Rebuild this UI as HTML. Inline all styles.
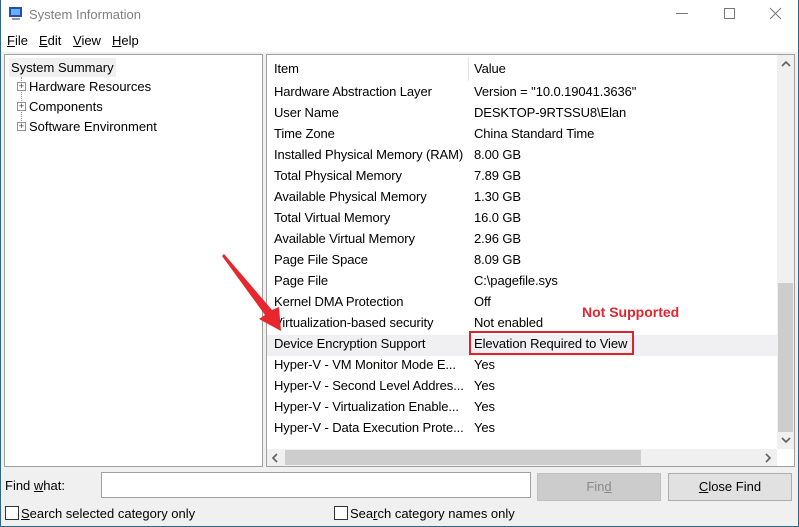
<!DOCTYPE html>
<html><head><meta charset="utf-8"><style>
*{margin:0;padding:0;box-sizing:border-box}
body{width:799px;height:527px;overflow:hidden;font-family:"Liberation Sans",sans-serif;font-size:13px;color:#000;background:#f0f0f0;position:relative}
.a{position:absolute;white-space:nowrap}
#win{position:absolute;left:0;top:0;width:799px;height:527px;border:1px solid #2f6585;border-top:none}
.u{text-decoration:underline}
.row{position:absolute;left:274px;height:21px;line-height:21px;letter-spacing:-0.1px}
.val{position:absolute;left:474px;height:21px;line-height:21px;letter-spacing:-0.1px}
.pl{display:inline-block;width:9px;height:9px;border:1px solid #919191;position:absolute;left:12px;font-size:9px;line-height:7px;text-align:center;color:#333;background:#fff}
</style></head><body>
<div class="a" style="left:0;top:0;width:799px;height:52px;background:#fff"></div>
<svg class="a" style="left:8px;top:6px" width="16" height="16"><rect x="1" y="1" width="13" height="10" fill="#2050b0"/><rect x="3" y="3" width="9" height="6" fill="#6ab0f0"/><rect x="4" y="12" width="8" height="2" fill="#999"/></svg>
<div class="a" style="left:29px;top:7px;color:#808080;font-size:13px">System Information</div>
<div class="a" style="left:676px;top:13px;width:12px;height:1px;background:#777"></div>
<div class="a" style="left:724px;top:8px;width:11px;height:11px;border:1px solid #777"></div>
<svg class="a" style="left:769px;top:7px" width="13" height="13"><path d="M1 1L12 12M12 1L1 12" stroke="#777" stroke-width="1"/></svg>
<div class="a" style="left:7px;top:33px"><span class="u">F</span>ile</div>
<div class="a" style="left:39px;top:33px"><span class="u">E</span>dit</div>
<div class="a" style="left:73px;top:33px"><span class="u">V</span>iew</div>
<div class="a" style="left:112px;top:33px"><span class="u">H</span>elp</div>
<div class="a" style="left:4px;top:54px;width:259px;height:413px;background:#fff;border:1px solid #a0a0a0">
 <div class="a" style="left:4px;top:3px;width:107px;height:19px;background:#f0f0f0;line-height:19px;padding-left:2px">System Summary</div>
 <div class="a" style="left:16px;top:22px;height:50px;border-left:1px dotted #999"></div>
 <div class="pl" style="top:27px">+</div><div class="a" style="left:24px;top:24px">Hardware Resources</div>
 <div class="pl" style="top:47px">+</div><div class="a" style="left:24px;top:44px">Components</div>
 <div class="pl" style="top:67px">+</div><div class="a" style="left:24px;top:64px">Software Environment</div>
</div>
<div class="a" style="left:266px;top:54px;width:529px;height:413px;background:#fff;border:1px solid #a0a0a0;overflow:hidden">
 <div class="a" style="left:0;top:280px;width:510px;height:21px;background:#f0f0f2"></div>
 <div class="a" style="left:201px;top:2px;width:1px;height:24px;background:#e5e5e5"></div>
 <div class="a" style="left:510px;top:0;width:17px;height:394px;background:#f0f0f0"></div>
 <div class="a" style="left:511px;top:228px;width:15px;height:149px;background:#cdcdcd"></div>
 <svg class="a" style="left:514px;top:5px" width="10" height="8"><path d="M1 6L5 2L9 6" stroke="#606060" stroke-width="1.6" fill="none"/></svg>
 <svg class="a" style="left:514px;top:381px" width="10" height="8"><path d="M1 2L5 6L9 2" stroke="#606060" stroke-width="1.6" fill="none"/></svg>
 <div class="a" style="left:0;top:394px;width:510px;height:17px;background:#f0f0f0"></div>
 <div class="a" style="left:18px;top:395px;width:356px;height:15px;background:#cdcdcd"></div>
 <svg class="a" style="left:4px;top:398px" width="8" height="10"><path d="M6 1L2 5L6 9" stroke="#606060" stroke-width="1.6" fill="none"/></svg>
 <svg class="a" style="left:497px;top:398px" width="8" height="10"><path d="M2 1L6 5L2 9" stroke="#606060" stroke-width="1.6" fill="none"/></svg>
</div>
<div class="row" style="top:58px">Item</div><div class="val" style="top:58px">Value</div>
<div class="row" style="top:81px">Hardware Abstraction Layer</div><div class="val" style="top:81px">Version = "10.0.19041.3636"</div>
<div class="row" style="top:102px">User Name</div><div class="val" style="top:102px">DESKTOP-9RTSSU8\Elan</div>
<div class="row" style="top:123px">Time Zone</div><div class="val" style="top:123px">China Standard Time</div>
<div class="row" style="top:144px">Installed Physical Memory (RAM)</div><div class="val" style="top:144px">8.00 GB</div>
<div class="row" style="top:165px">Total Physical Memory</div><div class="val" style="top:165px">7.89 GB</div>
<div class="row" style="top:186px">Available Physical Memory</div><div class="val" style="top:186px">1.30 GB</div>
<div class="row" style="top:207px">Total Virtual Memory</div><div class="val" style="top:207px">16.0 GB</div>
<div class="row" style="top:228px">Available Virtual Memory</div><div class="val" style="top:228px">2.96 GB</div>
<div class="row" style="top:249px">Page File Space</div><div class="val" style="top:249px">8.09 GB</div>
<div class="row" style="top:270px">Page File</div><div class="val" style="top:270px">C:\pagefile.sys</div>
<div class="row" style="top:291px">Kernel DMA Protection</div><div class="val" style="top:291px">Off</div>
<div class="row" style="top:312px">Virtualization-based security</div><div class="val" style="top:312px">Not enabled</div>
<div class="row" style="top:333px">Device Encryption Support</div><div class="val" style="top:333px">Elevation Required to View</div>
<div class="row" style="top:354px">Hyper-V - VM Monitor Mode E...</div><div class="val" style="top:354px">Yes</div>
<div class="row" style="top:375px">Hyper-V - Second Level Addres...</div><div class="val" style="top:375px">Yes</div>
<div class="row" style="top:396px">Hyper-V - Virtualization Enable...</div><div class="val" style="top:396px">Yes</div>
<div class="row" style="top:417px">Hyper-V - Data Execution Prote...</div><div class="val" style="top:417px">Yes</div>
<div class="a" style="left:469px;top:331px;width:165px;height:24px;border:2px solid #d9262e"></div>
<div class="a" style="left:582px;top:304px;color:#e0262e;font-weight:bold;font-size:14px">Not Supported</div>
<svg class="a" style="left:215px;top:250px" width="80" height="90"><path d="M7 6L9 4L57 60L64 57L66 81L44 69L50 65Z" fill="#e8262e"/></svg>
<div class="a" style="left:5px;top:478px">Find <span class="u">w</span>hat:</div>
<div class="a" style="left:101px;top:472px;width:430px;height:26px;background:#fff;border:1px solid #a0a0a0"></div>
<div class="a" style="left:537px;top:473px;width:124px;height:28px;background:#cccccc;border:1px solid #bfbfbf;color:#8a8a8a;text-align:center;line-height:26px">Fin<span class="u">d</span></div>
<div class="a" style="left:668px;top:473px;width:124px;height:28px;background:#e1e1e1;border:1px solid #adadad;text-align:center;line-height:26px"><span class="u">C</span>lose Find</div>
<div class="a" style="left:5px;top:506px;width:14px;height:14px;border:1px solid #333;background:#fff"></div>
<div class="a" style="left:21px;top:506px"><span class="u">S</span>earch selected category only</div>
<div class="a" style="left:334px;top:506px;width:14px;height:14px;border:1px solid #333;background:#fff"></div>
<div class="a" style="left:350px;top:506px">Sea<span class="u">r</span>ch category names only</div>
<div id="win"></div>
</body></html>
